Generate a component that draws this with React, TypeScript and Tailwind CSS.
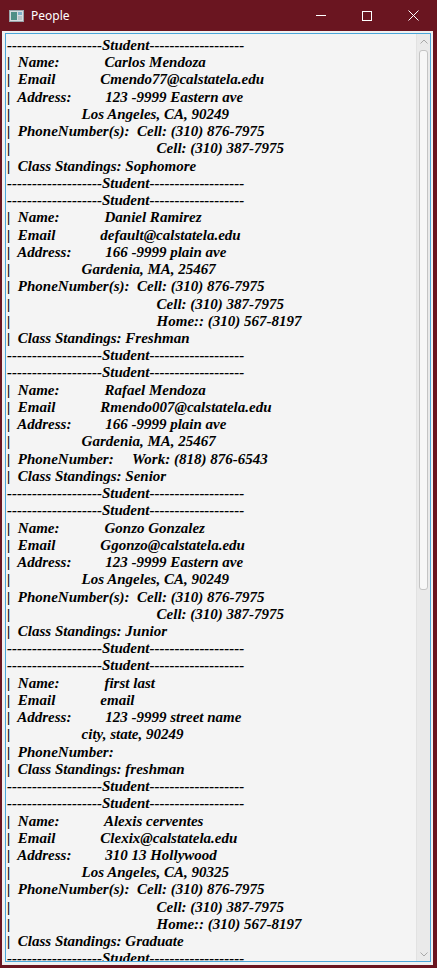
import React from "react";

type Student = {
  name: string;
  email: string;
  street: string;
  city: string;
  phoneLabel: string;
  phones: string[];
  standing: string;
};

const students: Student[] = [
  {
    name: "Carlos Mendoza",
    email: "Cmendo77@calstatela.edu",
    street: "123 -9999 Eastern ave",
    city: "Los Angeles, CA, 90249",
    phoneLabel: "PhoneNumber(s):  ",
    phones: ["Cell: (310) 876-7975", "Cell: (310) 387-7975"],
    standing: "Sophomore",
  },
  {
    name: "Daniel Ramirez",
    email: "default@calstatela.edu",
    street: "166 -9999 plain ave",
    city: "Gardenia, MA, 25467",
    phoneLabel: "PhoneNumber(s):  ",
    phones: ["Cell: (310) 876-7975", "Cell: (310) 387-7975", "Home:: (310) 567-8197"],
    standing: "Freshman",
  },
  {
    name: "Rafael Mendoza",
    email: "Rmendo007@calstatela.edu",
    street: "166 -9999 plain ave",
    city: "Gardenia, MA, 25467",
    phoneLabel: "PhoneNumber:     ",
    phones: ["Work: (818) 876-6543"],
    standing: "Senior",
  },
  {
    name: "Gonzo Gonzalez",
    email: "Ggonzo@calstatela.edu",
    street: "123 -9999 Eastern ave",
    city: "Los Angeles, CA, 90249",
    phoneLabel: "PhoneNumber(s):  ",
    phones: ["Cell: (310) 876-7975", "Cell: (310) 387-7975"],
    standing: "Junior",
  },
  {
    name: "first last",
    email: "email",
    street: "123 -9999 street name",
    city: "city, state, 90249",
    phoneLabel: "PhoneNumber:",
    phones: [],
    standing: "freshman",
  },
  {
    name: "Alexis cerventes",
    email: "Clexix@calstatela.edu",
    street: "310 13 Hollywood",
    city: "Los Angeles, CA, 90325",
    phoneLabel: "PhoneNumber(s):  ",
    phones: ["Cell: (310) 876-7975", "Cell: (310) 387-7975", "Home:: (310) 567-8197"],
    standing: "Graduate",
  },
];

const sp = (n: number) => " ".repeat(n);
const bar = "-------------------Student-------------------";

function buildLines(): string[] {
  const out: string[] = [];
  students.forEach((s) => {
    out.push(bar);
    out.push("|  Name:" + sp(12) + s.name);
    out.push("|  Email" + sp(12) + s.email);
    out.push("|  Address:" + sp(9) + s.street);
    out.push("|" + sp(19) + s.city);
    out.push("|  " + s.phoneLabel + (s.phones[0] ?? ""));
    s.phones.slice(1).forEach((p) => out.push("|" + sp(39) + p));
    out.push("|  Class Standings: " + s.standing);
    out.push(bar);
  });
  return out;
}

const AppIcon = () => (
  <svg width="15" height="12" viewBox="0 0 15 12">
    <rect x="0.5" y="0.5" width="14" height="11" fill="#d8dde0" stroke="#9aa5ab" />
    <rect x="2" y="2" width="6" height="8" fill="#4f8f86" />
    <rect x="9" y="2" width="4" height="3" fill="#7fb0c8" />
    <rect x="9" y="6" width="4" height="4" fill="#b9c4c8" />
  </svg>
);

export default function App() {
  const lines = buildLines();

  return (
    <div className="w-[437px] h-[968px] bg-[#6a1520] flex flex-col overflow-hidden">
      {/* title bar */}
      <div className="h-[31px] flex items-center shrink-0">
        <div className="pl-[9px] pr-[7px] flex items-center">
          <AppIcon />
        </div>
        <span className="text-white text-[12px] font-['Noto_Sans',sans-serif]">People</span>
        <div className="ml-auto flex h-full pr-[1px]">
          <div className="w-[46px] h-full flex items-center justify-center">
            <div className="w-[10px] h-px bg-white" />
          </div>
          <div className="w-[46px] h-full flex items-center justify-center">
            <div className="w-[10px] h-[10px] border border-white" />
          </div>
          <div className="w-[46px] h-full flex items-center justify-center">
            <svg width="11" height="11" viewBox="0 0 11 11">
              <path d="M0.5 0.5 L10.5 10.5 M10.5 0.5 L0.5 10.5" stroke="#fff" strokeWidth="1" />
            </svg>
          </div>
        </div>
      </div>

      {/* client area */}
      <div className="flex-1 min-h-0 ml-[2px] mr-[4px] mb-[3px] bg-[#f0f0f0] pl-[3px] pr-[2px] pt-[2px] pb-[3px] flex">
        <div className="flex-1 min-h-0 border border-[#4aa6da] bg-[#f4f4f4] flex">
          <div className="flex-1 min-w-0 overflow-hidden pl-[1px] pt-[3px]">
            {lines.map((l, i) => (
              <div
                key={i}
                className="whitespace-pre font-['Liberation_Serif',serif] italic font-bold text-[15px] leading-[17.23px] text-black"
              >
                {l}
              </div>
            ))}
          </div>

          {/* scrollbar */}
          <div className="w-[14px] bg-[#eaeaea] border-l border-[#e2e2e2] flex flex-col items-center">
            <div className="h-[14px] flex items-center justify-center">
              <svg width="8" height="5" viewBox="0 0 8 5">
                <path d="M0.5 4.5 L4 1 L7.5 4.5" fill="none" stroke="#a8a8a8" strokeWidth="1" />
              </svg>
            </div>
            <div className="w-[9px] h-[540px] mt-[2px] rounded-[3px] bg-[#f7f7f7] border border-[#c4c4c4]" />
            <div className="flex-1" />
            <div className="h-[14px] flex items-center justify-center">
              <svg width="8" height="5" viewBox="0 0 8 5">
                <path d="M0.5 0.5 L4 4 L7.5 0.5" fill="none" stroke="#a8a8a8" strokeWidth="1" />
              </svg>
            </div>
          </div>
        </div>
      </div>
    </div>
  );
}
